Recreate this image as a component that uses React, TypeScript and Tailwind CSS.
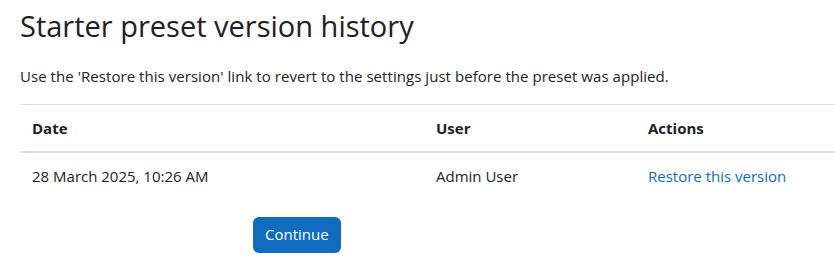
export default function App() {
  const rows = [
    { date: '28 March 2025, 10:26 AM', user: 'Admin User' },
  ];

  return (
    <div
      className="min-h-screen w-[835px] overflow-hidden bg-white pl-5 text-[15px] leading-[22.5px] text-[#1d2125]"
      style={{ fontFamily: '"Open Sans", "Noto Sans", sans-serif' }}
    >
      {/* heading */}
      <h2 className="pt-[8px] text-[29px] leading-[36px] font-normal">Starter preset version history</h2>

      <p className="mt-[21px] mb-4 tracking-[0.05px]">
        Use the 'Restore this version' link to revert to the settings just before the preset was applied.
      </p>

      {/* table */}
      <div className="w-[815px]">
        <div className="grid grid-cols-[404px_212px_1fr] border-t border-b-2 border-[#dee2e6] font-bold">
          <div className="p-3">Date</div>
          <div className="p-3">User</div>
          <div className="p-3">Actions</div>
        </div>
        {rows.map((r) => (
          <div key={r.date} className="grid grid-cols-[404px_212px_1fr]">
            <div className="p-3">{r.date}</div>
            <div className="p-3">{r.user}</div>
            <div className="p-3">
              <a href="#" className="text-[#0f6cbf]">Restore this version</a>
            </div>
          </div>
        ))}
      </div>

      <div className="mt-[17px] pl-[233px]">
        <button className="h-9 rounded-md bg-[#0f6cbf] px-3 text-white">Continue</button>
      </div>
    </div>
  );
}
